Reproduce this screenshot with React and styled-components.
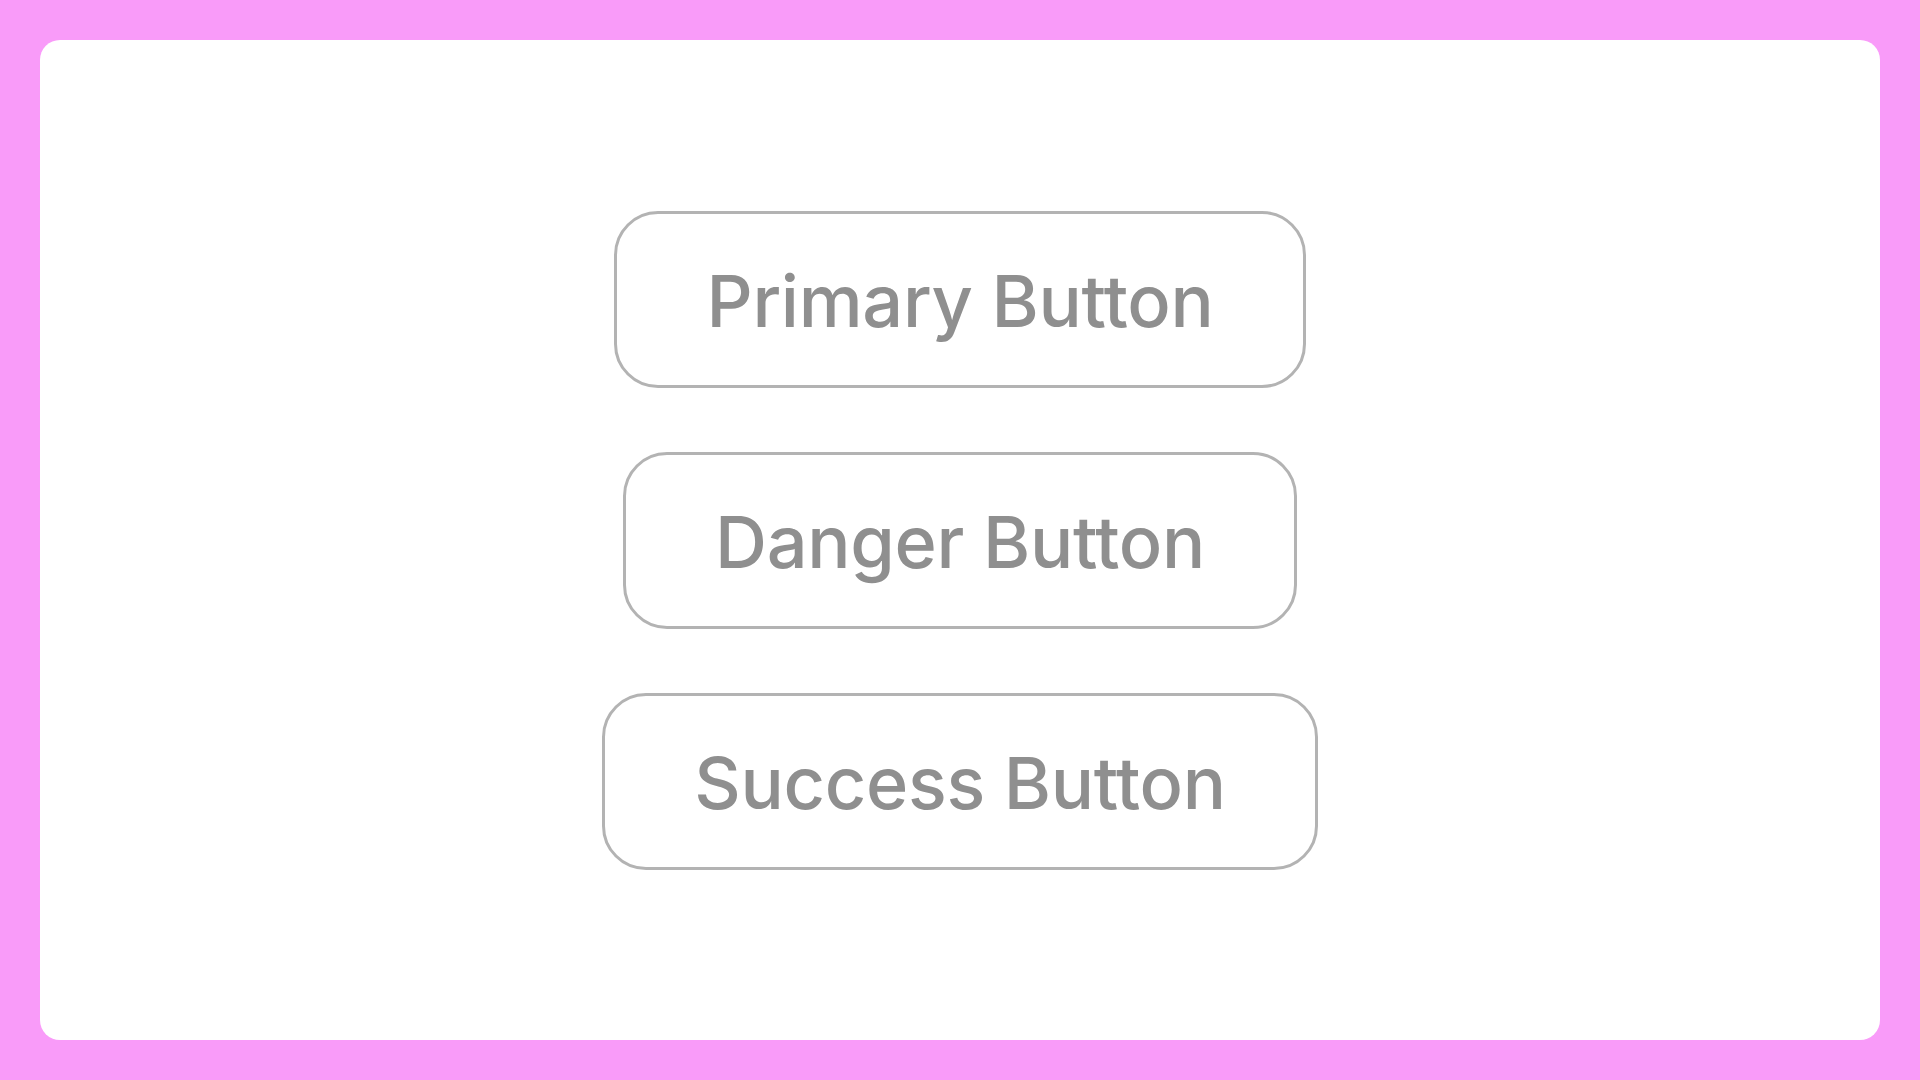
import React from "react";
import styled, { createGlobalStyle } from "styled-components";

const Global = createGlobalStyle`
  html, body { margin: 0; padding: 0; }
  body {
    background: #f99bf9;
    font-family: Inter, "Noto Sans", sans-serif;
  }
`;

const Frame = styled.div`
  box-sizing: border-box;
  width: 1920px;
  height: 1080px;
  padding: 40px;
  background: #f99bf9;
`;

const Card = styled.main`
  box-sizing: border-box;
  height: 100%;
  background: #ffffff;
  border-radius: 20px;
  display: flex;
  flex-direction: column;
  align-items: center;
  justify-content: center;
  gap: 64px;
`;

const Button = styled.button`
  box-sizing: border-box;
  height: 177px;
  padding: 4px 89px 0;
  background: #ffffff;
  border: 3px solid #b3b3b3;
  border-radius: 44px;
  color: #8f8f8f;
  font-family: Inter, "Noto Sans", sans-serif;
  font-size: 72px;
  font-weight: 500;
  letter-spacing: -0.3px;
  line-height: 1;
  cursor: pointer;
`;

export default function App() {
  return (
    <>
      <Global />
      <Frame>
        <Card>
          <Button>Primary Button</Button>
          <Button>Danger Button</Button>
          <Button>Success Button</Button>
        </Card>
      </Frame>
    </>
  );
}
